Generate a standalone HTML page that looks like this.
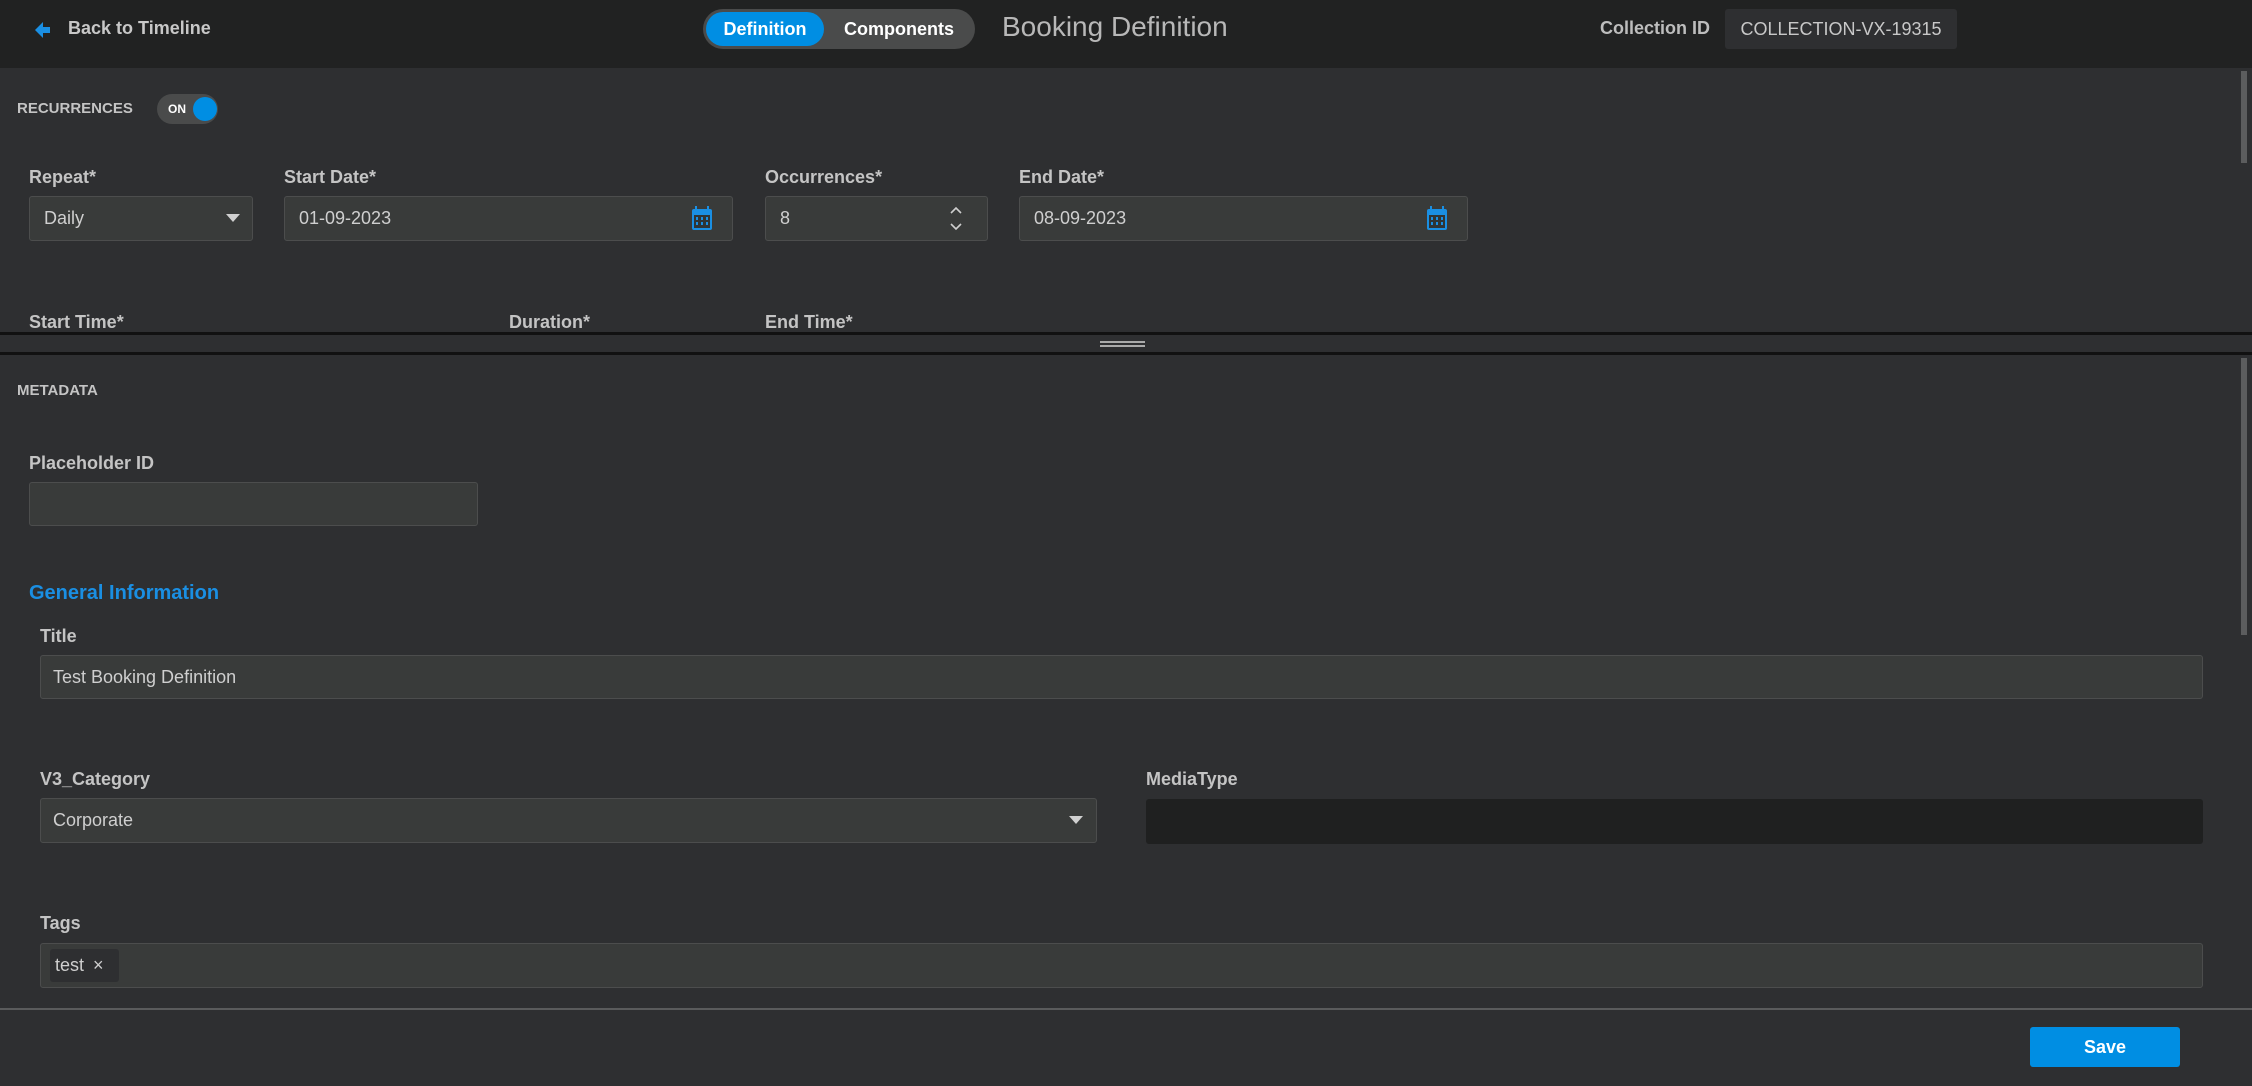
<!DOCTYPE html>
<html><head><meta charset="utf-8"><style>
*{box-sizing:border-box;margin:0;padding:0}
body{width:2252px;height:1086px;background:#2e2f31;font-family:"Liberation Sans",sans-serif;color:#c8c8c8;position:relative;overflow:hidden}
.a{position:absolute}
.hdr{left:0;top:0;width:2252px;height:68px;background:#212222}
.lbl{font-size:18px;font-weight:bold;color:#c4c4c4}
.inp{background:#393b3a;border:1px solid #4c4d4d;border-radius:3px;font-size:18px;color:#cfcfcf;padding-left:14px;display:flex;align-items:center}
.sec{font-size:15px;font-weight:bold;color:#c4c4c4}
</style></head><body>
<div class="a hdr"></div>
<svg class="a" style="left:34px;top:20px" width="18" height="20" viewBox="0 0 18 20"><path d="M1 10 L9 2 L9 7 L16 7 L16 13 L9 13 L9 18 Z" fill="#1a8fe3"/></svg>
<div class="a" style="left:68px;top:18px;font-size:18px;font-weight:bold;color:#c8c8c8">Back to Timeline</div>
<div class="a" style="left:703px;top:9px;width:272px;height:40px;border-radius:20px;background:#4a4b4b"></div>
<div class="a" style="left:706px;top:12px;width:118px;height:34px;border-radius:17px;background:#008ee3;color:#fff;font-weight:bold;font-size:18px;text-align:center;line-height:34px">Definition</div>
<div class="a" style="left:826px;top:12px;width:146px;height:34px;color:#fff;font-weight:bold;font-size:18px;text-align:center;line-height:34px">Components</div>
<div class="a" style="left:1002px;top:11px;font-size:28px;color:#b8b8b8">Booking Definition</div>
<div class="a" style="left:1600px;top:18px;font-size:18px;font-weight:bold;color:#bdbdbd">Collection ID</div>
<div class="a" style="left:1725px;top:9px;width:232px;height:40px;background:#2e2f31;border-radius:3px;font-size:18px;color:#c8c8c8;line-height:40px;text-align:center">COLLECTION-VX-19315</div>

<div class="a" style="left:2241px;top:71px;width:6px;height:92px;background:#5c5d5e"></div>
<div class="a sec" style="left:17px;top:100px">RECURRENCES</div>
<div class="a" style="left:157px;top:94px;width:61px;height:30px;border-radius:15px;background:#4a4b4b"></div>
<div class="a" style="left:168px;top:102px;font-size:12px;font-weight:bold;color:#fff">ON</div>
<div class="a" style="left:193px;top:97px;width:24px;height:24px;border-radius:12px;background:#008ee3"></div>

<div class="a lbl" style="left:29px;top:167px">Repeat*</div>
<div class="a lbl" style="left:284px;top:167px">Start Date*</div>
<div class="a lbl" style="left:765px;top:167px">Occurrences*</div>
<div class="a lbl" style="left:1019px;top:167px">End Date*</div>
<div class="a inp" style="left:29px;top:196px;width:224px;height:45px">Daily</div>
<div class="a" style="left:226px;top:214px;width:0;height:0;border-left:7px solid transparent;border-right:7px solid transparent;border-top:8px solid #d0d0d0"></div>
<div class="a inp" style="left:284px;top:196px;width:449px;height:45px">01-09-2023</div>
<div class="a inp" style="left:765px;top:196px;width:223px;height:45px">8</div>
<svg class="a" style="left:948px;top:204px" width="16" height="30" viewBox="0 0 16 30"><path d="M3 9 L8 4 L13 9 M3 20 L8 25 L13 20" stroke="#cfcfcf" stroke-width="1.6" fill="none"/></svg>
<div class="a inp" style="left:1019px;top:196px;width:449px;height:45px">08-09-2023</div>
<svg class="a" style="left:691px;top:205px" width="22" height="26" viewBox="0 0 22 26"><rect x="1" y="4" width="20" height="21" rx="2" fill="#1a8fe3"/><rect x="4" y="1" width="2" height="5" fill="#1a8fe3"/><rect x="16" y="1" width="2" height="5" fill="#1a8fe3"/><rect x="3" y="10" width="16" height="13" fill="#2f3536"/><g fill="#1a8fe3"><rect x="5" y="12" width="2" height="3"/><rect x="10" y="12" width="2" height="3"/><rect x="15" y="12" width="2" height="3"/><rect x="5" y="17" width="2" height="3"/><rect x="10" y="17" width="2" height="3"/><rect x="15" y="17" width="2" height="3"/></g></svg>
<svg class="a" style="left:1426px;top:205px" width="22" height="26" viewBox="0 0 22 26"><rect x="1" y="4" width="20" height="21" rx="2" fill="#1a8fe3"/><rect x="4" y="1" width="2" height="5" fill="#1a8fe3"/><rect x="16" y="1" width="2" height="5" fill="#1a8fe3"/><rect x="3" y="10" width="16" height="13" fill="#2f3536"/><g fill="#1a8fe3"><rect x="5" y="12" width="2" height="3"/><rect x="10" y="12" width="2" height="3"/><rect x="15" y="12" width="2" height="3"/><rect x="5" y="17" width="2" height="3"/><rect x="10" y="17" width="2" height="3"/><rect x="15" y="17" width="2" height="3"/></g></svg>
<div class="a lbl" style="left:29px;top:312px">Start Time*</div>
<div class="a lbl" style="left:509px;top:312px">Duration*</div>
<div class="a lbl" style="left:765px;top:312px">End Time*</div>

<div class="a" style="left:0;top:332px;width:2252px;height:3px;background:#111"></div>
<div class="a" style="left:0;top:335px;width:2252px;height:17px;background:#2e2f31"></div>
<div class="a" style="left:0;top:352px;width:2252px;height:3px;background:#111"></div>
<div class="a" style="left:1100px;top:341px;width:45px;height:2px;background:#aaa"></div>
<div class="a" style="left:1100px;top:345px;width:45px;height:2px;background:#aaa"></div>
<div class="a" style="left:2241px;top:358px;width:6px;height:277px;background:#5c5d5e"></div>

<div class="a sec" style="left:17px;top:382px">METADATA</div>
<div class="a lbl" style="left:29px;top:453px">Placeholder ID</div>
<div class="a inp" style="left:29px;top:482px;width:449px;height:44px"></div>
<div class="a" style="left:29px;top:582px;font-size:20px;font-weight:bold;color:#1a8fe3">General Information</div>
<div class="a lbl" style="left:40px;top:626px">Title</div>
<div class="a inp" style="left:40px;top:655px;width:2163px;height:44px;padding-left:12px">Test Booking Definition</div>
<div class="a lbl" style="left:40px;top:769px">V3_Category</div>
<div class="a lbl" style="left:1146px;top:769px">MediaType</div>
<div class="a inp" style="left:40px;top:798px;width:1057px;height:45px;padding-left:12px">Corporate</div>
<div class="a" style="left:1069px;top:816px;width:0;height:0;border-left:7px solid transparent;border-right:7px solid transparent;border-top:8px solid #d0d0d0"></div>
<div class="a" style="left:1146px;top:799px;width:1057px;height:45px;background:#1f2020;border-radius:3px"></div>
<div class="a lbl" style="left:40px;top:913px">Tags</div>
<div class="a inp" style="left:40px;top:943px;width:2163px;height:45px;padding-left:0"></div>
<div class="a" style="left:50px;top:949px;width:69px;height:33px;background:#2e2f31;border-radius:3px;font-size:18px;color:#cfcfcf;line-height:33px;padding-left:5px">test <span style="font-size:18px;margin-left:4px">×</span></div>

<div class="a" style="left:0;top:1008px;width:2252px;height:2px;background:#5a5b5c"></div>
<div class="a" style="left:2030px;top:1027px;width:150px;height:40px;background:#008ee3;border-radius:3px;color:#fff;font-weight:bold;font-size:18px;text-align:center;line-height:40px">Save</div>
</body></html>
